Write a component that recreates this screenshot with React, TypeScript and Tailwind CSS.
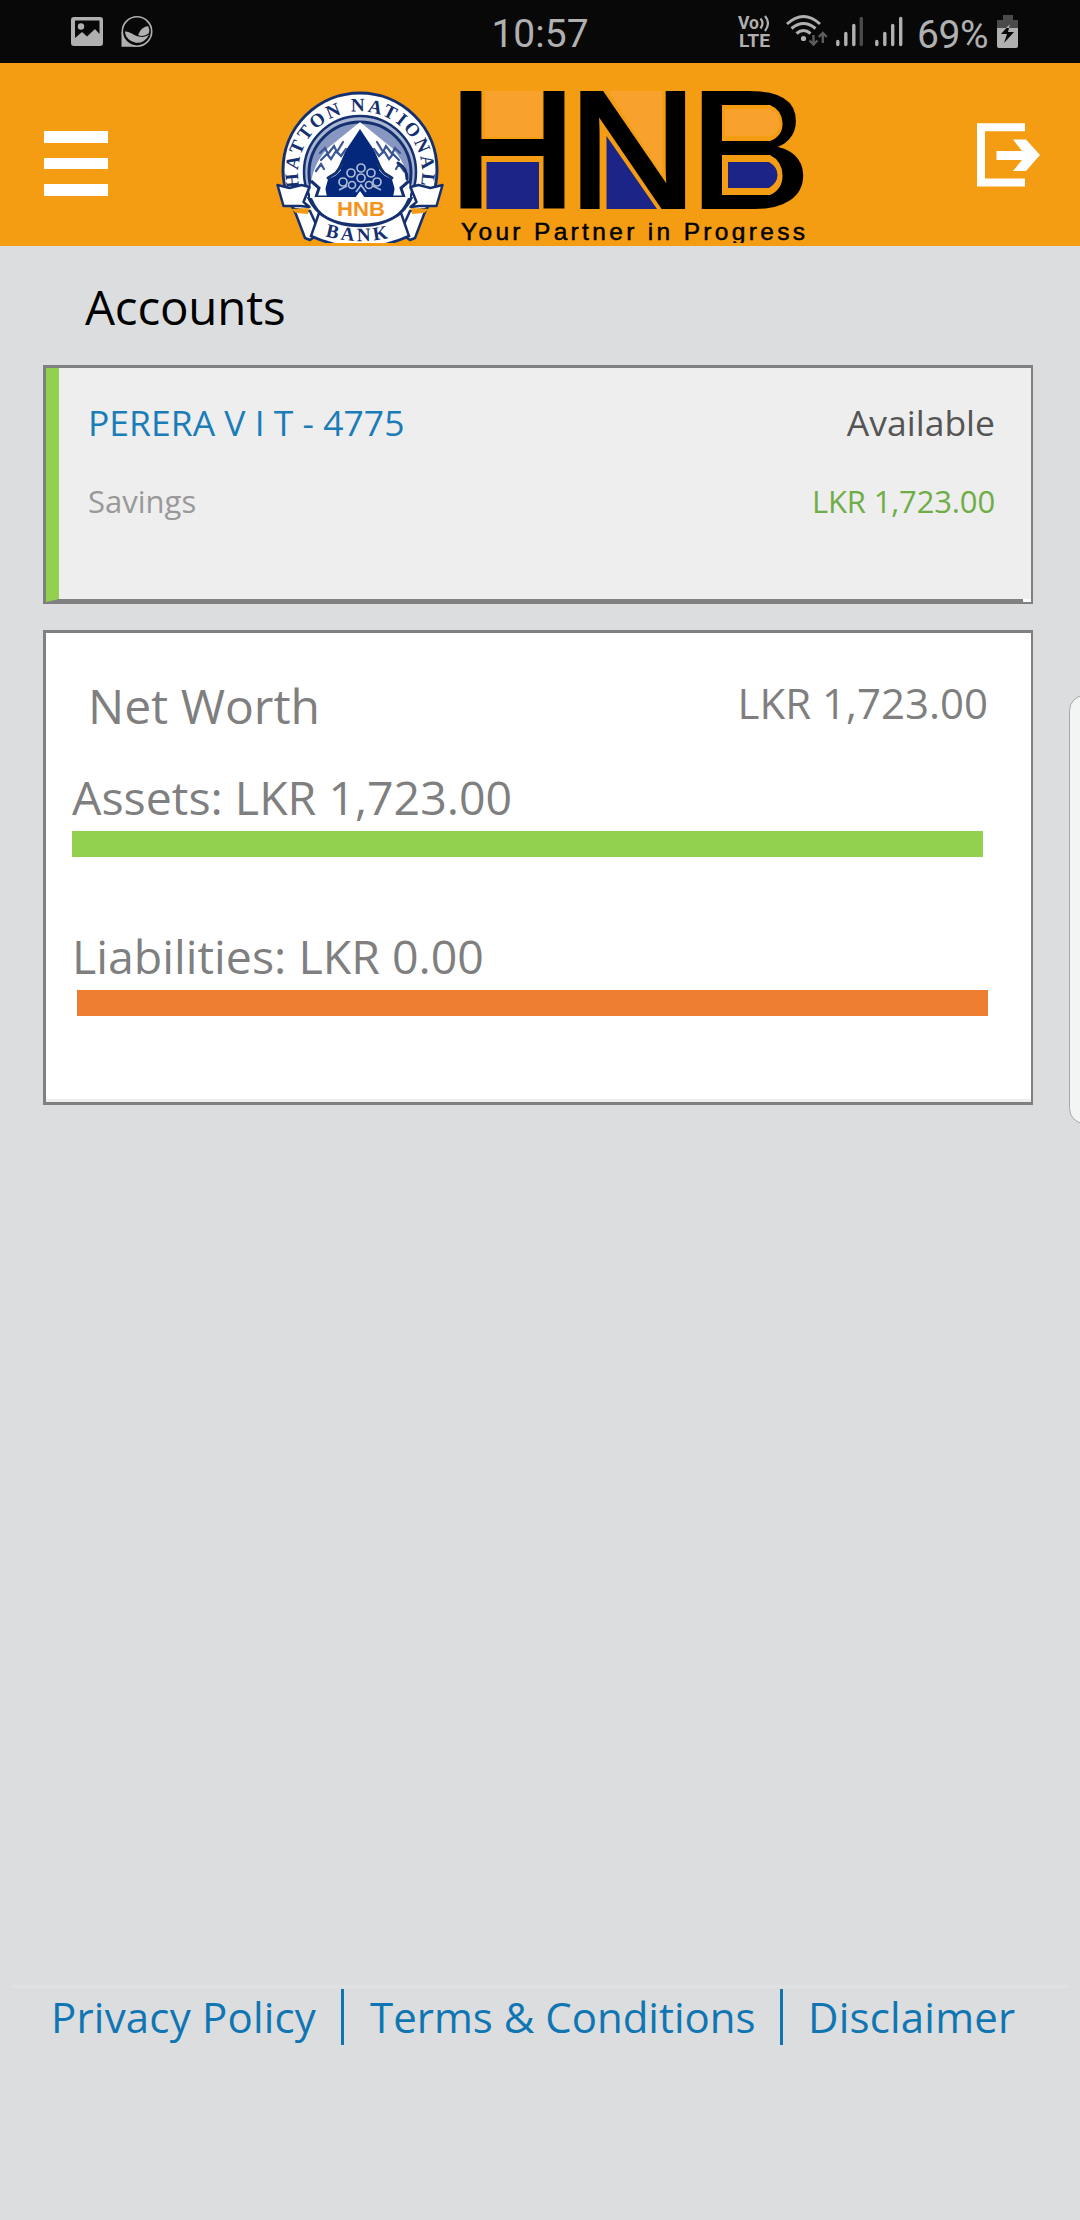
import React from "react";

function StatusBar() {
  return (
    <div className="flex h-[63px] w-full items-start bg-[#080808] font-['Roboto',sans-serif] text-[#b0b0b0]">
      <svg className="h-[63px] w-[480px] shrink-0" viewBox="0 0 480 63">
        <path
          fill="#b0b0b0"
          fillRule="evenodd"
          d="M74 17h26q3 0 3 3v23q0 3-3 3H74q-3 0-3-3V20q0-3 3-3Zm1 3.500V38l7-6 5 4.500 8-7.500 4.500 5V20.500Z"
        />
        <circle cx="81" cy="26.500" r="3.200" fill="#b0b0b0" />
        <path d="M121.500 32V46.800H137Z" fill="#b0b0b0" />
        <circle cx="137" cy="31.500" r="14.700" fill="#080808" stroke="#b0b0b0" strokeWidth="1.600" />
        <path d="M124.800 31.500C130 31 134 36 139 36.500Q145 38 149 34.500A12.500 12.500 0 0 1 124.800 31.500Z" fill="#b0b0b0" />
        <path d="M138 35Q141 27 148 26Q150.500 31 148.500 33.500Q144 37.500 138 35Z" fill="#b0b0b0" />
      </svg>
      <div className="flex h-[63px] w-[120px] shrink-0 justify-center pt-[2px] text-[39px] leading-[64px]">10:57</div>
      <svg className="h-[63px] w-[317px] shrink-0" viewBox="600 0 317 63">
        <g fill="#b0b0b0" fontFamily="Roboto, sans-serif" fontWeight="700">
          <text x="738" y="29" fontSize="17.500" textLength="21" lengthAdjust="spacingAndGlyphs">Vo</text>
          <text x="739" y="47" fontSize="18" textLength="31" lengthAdjust="spacingAndGlyphs">LTE</text>
        </g>
        <g fill="none" stroke="#b0b0b0">
          <path d="M760.500 18.500q4 4.500 0 10M765 16q6 7 0 15" strokeWidth="2.200" />
          <path d="M787 24q16.500-15 33 0M791.500 28.500q12-10 24 0M796.500 33.500q7-6 14 0" strokeWidth="3" />
        </g>
        <circle cx="803.500" cy="38.500" r="2.600" fill="#b0b0b0" />
        <path d="M813.500 35v9M809.500 40.500l4 4 4-4M822.800 43v-9M818.800 37l4-4 4 4" fill="none" stroke="#5c5c5c" strokeWidth="2.400" />
        <g stroke="#b0b0b0" strokeWidth="3.400" strokeLinecap="round">
          <path d="M837.800 41.500v3M845.800 33.500v11M853.800 25.500v19" />
          <path d="M861.300 18.500v26" stroke="#4a4a4a" />
          <path d="M876.800 41.500v3M884.800 33.500v11M892.700 25.500v19M900.700 18.500v26" />
        </g>
      </svg>
      <div className="h-[63px] w-[76px] shrink-0 whitespace-nowrap pt-[2px] text-[39px] leading-[66px] tracking-[-0.4px]">69%</div>
      <svg className="h-[63px] w-[40px] shrink-0" viewBox="993 0 40 63">
        <path d="M997 28V20h6v-5h10v5h5v8Z" fill="#4a4a4a" />
        <path d="M997 28h21v18q0 2-2 2h-17q-2 0-2-2Z" fill="#b0b0b0" />
        <path d="M1010 24l-9 10h6l-3 9 10-11h-6Z" fill="#080808" />
        <path d="M1010 24l-4 4h3Z" fill="#b0b0b0" />
      </svg>
    </div>
  );
}

function Crest() {
  return (
    <g>
      {/* outer ring */}
      <circle cx="360" cy="170" r="77" fill="#fff" stroke="#14306f" strokeWidth="3" />
      <circle cx="360" cy="172" r="56" fill="#a9b5d3" stroke="#14306f" strokeWidth="2.500" />
      <circle cx="360" cy="173" r="51" fill="#8797c2" stroke="#14306f" strokeWidth="3" />
      <path id="ring" d="M305.500 203A62 62 0 1 1 414.500 203" fill="none" />
      {/* mountain between two lions */}
      <path d="M310 198q-1-30 18-50l32-26 32 26q19 20 18 50Z" fill="#fff" />
      <path d="M323 197l6-21 9-8 8-18 14-21 14 21 8 18 9 8 6 21Z" fill="#04297c" />
      <path d="M312 190q2-17 8-23 4-12 12-17 7 0 7 7-3 7-8 10 8-1 10 3-6 8-14 9l-2 8 2 10h-12Z" fill="#fff" />
      <path d="M408 190q-2-17-8-23-4-12-12-17-7 0-7 7 3 7 8 10-8-1-10 3 6 8 14 9l2 8-2 10h12Z" fill="#fff" />
      <g fill="none" stroke="#3a5597" strokeWidth="2.200" strokeLinecap="round">
        <path d="M320 153l5-5 3 6 6-8 3 6 6-10M321 160l6-6 4 5 5-8 5 5 5-7M316 171l5-7 3 5" />
        <path d="M400 153l-5-5-3 6-6-8-3 6-6-10M399 160l-6-6-4 5-5-8-5 5-5-7M404 171l-5-7-3 5" />
        <path d="M328 178l8-5 6-8M392 178l-8-5-6-8M398 163q9 5 9 16" strokeWidth="3" stroke="#14306f" />
      </g>
      <path d="M311 181l8 7-3 9h11M409 181l-8 7 3 9h-11" fill="none" stroke="#14306f" strokeWidth="3" />
      <g fill="none" stroke="#aeb9d6" strokeWidth="1.700">
        <circle cx="343" cy="182" r="4" />
        <circle cx="351" cy="173" r="4" />
        <circle cx="361" cy="168" r="4" />
        <circle cx="371" cy="173" r="4" />
        <circle cx="377" cy="182" r="4" />
        <circle cx="361" cy="178" r="4" />
        <circle cx="352" cy="185" r="3.500" />
        <circle cx="369" cy="185" r="3.500" />
        <path d="M339 190l8-4M381 190l-8-4M356 192l5-7 5 7" />
      </g>
      {/* white base */}
      <path d="M312 197h96q-9 28-48 28t-48-28Z" fill="#fff" />
      <path d="M355 198l5-7 5 7Z" fill="#fff" />
      <path d="M308 197Q320 225 360 225T412 197" fill="none" stroke="#14306f" strokeWidth="2.500" />
      <text x="337" y="216" fontFamily="Liberation Sans, sans-serif" fontWeight="700" fontSize="21" fill="#f4941c" textLength="48" lengthAdjust="spacingAndGlyphs">HNB</text>
      {/* ribbon */}
      <g fill="#fff" stroke="#14306f" strokeWidth="2.500" strokeLinejoin="round">
        <path d="M294 209l16 2 10 22-10 7-5-2Z" />
        <path d="M426 209l-16 2-10 22 10 7 5-2Z" />
        <path d="M277.500 185l12 3 12-3 8 2-6 15 6 5-9-1-17 0Z" />
        <path d="M442.500 185l-12 3-12-3-8 2 6 15-6 5 9-1 17 0Z" />
      </g>
      <path d="M291 209l18-1-1 6-12-1ZM429 209l-18-1 1 6 12-1Z" fill="#f49d12" />
      <text fontFamily="Liberation Serif, serif" fontWeight="700" fontSize="19" letterSpacing="2.400" fill="#14306f" textAnchor="middle">
        <textPath href="#ring" startOffset="50%">HATTON NATIONAL</textPath>
      </text>
      <path d="M319 213Q336 226 360 226T401 213L409 236Q386 247 360 247T311 236Z" fill="#fff" stroke="#14306f" strokeWidth="2.500" />
      <path id="bank" d="M325 236Q360 246 397 236" fill="none" />
      <text fontFamily="Liberation Serif, serif" fontWeight="700" fontSize="19" fill="#14306f">
        <textPath href="#bank" textLength="64" lengthAdjust="spacing">BANK</textPath>
      </text>
    </g>
  );
}

function Logo() {
  return (
    <svg className="h-[180px] w-[540px] shrink-0" viewBox="270 63 540 180">
      <Crest />
      <path fill="#f8a12c" d="M485 91h57v46h-57ZM608 91h54v84Z" />
      <g fill="#000" stroke="#000" strokeWidth="4" fontFamily="Liberation Sans, sans-serif" fontSize="165.700">
        <text transform="translate(448 206.500) scale(1.077 1)">H</text>
        <text transform="translate(567.700 206.500) scale(1.085 1)">N</text>
        <text transform="translate(689 206.500) scale(1.100 1)">B</text>
      </g>
      {/* coloured counters */}
      <path fill="#f49d12" d="M722 105h48q12 5 12.500 18t-12.500 18h-48ZM722 155h48q12 6 12.500 20t-12.500 20h-48Z" />
      <path fill="#f8a12c" d="M725 109h46q8 4 8 14t-8 13h-46Z" />
      <path fill="#1c2587" d="M486.500 162H539v47H486.500ZM606.500 136V209H657ZM728 162h41q8.500 5 8.500 13t-8.500 13h-41Z" />
      <text x="461" y="240.300" fontFamily="Liberation Sans, sans-serif" fontSize="24.500" stroke="#000" strokeWidth="0.500" textLength="344" lengthAdjust="spacing">
        Your Partner in Progress
      </text>
    </svg>
  );
}

function Header() {
  return (
    <header className="flex h-[183px] w-full items-start bg-[#f49d12]">
      <button aria-label="Menu" className="ml-[44px] mt-[68px] flex w-[64px] shrink-0 flex-col gap-[15px]">
        <span className="h-[11.500px] w-full bg-white" />
        <span className="h-[11.500px] w-full bg-white" />
        <span className="h-[11.500px] w-full bg-white" />
      </button>
      <div className="ml-[162px]">
        <Logo />
      </div>
      <button aria-label="Log out" className="ml-[166px] mt-[60px]">
        <svg className="h-[64px] w-[65px]" viewBox="976 123 65 64">
          <path d="M1025 127.200H981V182.500H1025" fill="none" stroke="#fff" strokeWidth="8" />
          <path d="M996.500 151H1022L1013 139.500H1026L1040 155L1026 171H1013L1022 160H996.500Z" fill="#fff" />
        </svg>
      </button>
    </header>
  );
}

function AccountCard() {
  return (
    <section className="ml-[43px] h-[239px] w-[990px] border-b-2 border-l-[3px] border-r-2 border-t-[3px] border-[#808080] bg-[#eeeeee]">
      <div className="flex h-[234px] w-full flex-col">
        <div className="flex h-[231px] w-full border-l-[13px] border-[#92d150] pl-[29px] pr-[36px] pt-[30px]">
          <div className="flex w-full flex-col">
            <div className="flex justify-between text-[35.5px] leading-[48px]">
              <span className="text-[#1a7db8]">PERERA V I T - 4775</span>
              <span className="text-[#555555]">Available</span>
            </div>
            <div className="mt-[33px] flex justify-between text-[31px] leading-[44px]">
              <span className="text-[#999999]">Savings</span>
              <span className="tracking-[-0.15px] text-[#70ad47]">LKR 1,723.00</span>
            </div>
          </div>
        </div>
        <div className="h-[3px] w-full bg-white">
          <div className="h-0 w-[977px] border-b-[3px] border-l-[13px] border-b-[#808080] border-l-[#92d150]" />
        </div>
      </div>
    </section>
  );
}

function NetWorthCard() {
  return (
    <section className="ml-[43px] mt-[26px] flex h-[475px] w-[990px] flex-col border-y-[3px] border-l-[3px] border-r-2 border-[#808080] bg-white text-[#7f7f7f]">
      <div className="mt-[43px] flex justify-between pl-[42px] pr-[43px]">
        <span className="text-[48px] leading-[60px]">Net Worth</span>
        <span className="text-[42px] leading-[54px]">LKR 1,723.00</span>
      </div>
      <div className="ml-[26px] mt-[31px] text-[46.5px] leading-[60px]">Assets: LKR 1,723.00</div>
      <div className="ml-[26px] mt-[4px] h-[26px] w-[911px] bg-[#92d150]" />
      <div className="ml-[26px] mt-[69px] text-[46.5px] leading-[60px]">Liabilities: LKR 0.00</div>
      <div className="ml-[31px] mt-[4px] h-[26px] w-[911px] bg-[#ed7d31]" />
      <div className="mt-auto h-[3px] w-full bg-[#eeeeee]" />
    </section>
  );
}

function Footer() {
  return (
    <footer className="mx-[11px] mt-auto h-[235px] border-t-[3px] border-[#e0e1e2]">
      <nav className="mt-[1px] flex h-[56px] text-[42px] leading-[56px] text-[#0f76b3]">
        <a className="w-[330px] whitespace-nowrap pl-[40px] tracking-[0.2px]">Privacy Policy</a>
        <a className="w-[439px] whitespace-nowrap border-l-[3px] border-[#0f76b3] pl-[26px]">Terms &amp; Conditions</a>
        <a className="whitespace-nowrap border-l-[3px] border-[#0f76b3] pl-[25px] tracking-[0.2px]">Disclaimer</a>
      </nav>
    </footer>
  );
}

export default function App() {
  return (
    <div className="relative flex h-[2220px] w-[1080px] flex-col overflow-hidden bg-[#dcddde] font-['Open_Sans',sans-serif]">
      <StatusBar />
      <Header />
      <h1 className="ml-[85px] mt-[31px] mb-[28px] h-[60px] text-[47.5px] leading-[60px] tracking-[-0.2px] text-black">Accounts</h1>
      <AccountCard />
      <NetWorthCard />
      <Footer />
      <div className="absolute -right-[20px] top-[695px] h-[429px] w-[31px] rounded-[16px] border border-[#a6a7a7] bg-[#f3f4f4]" />
    </div>
  );
}
